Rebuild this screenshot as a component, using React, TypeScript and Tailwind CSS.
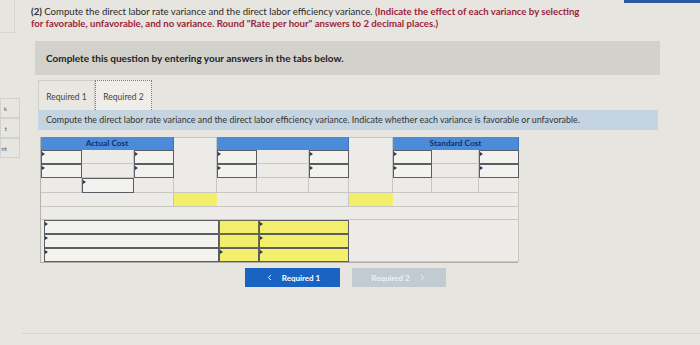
import React from 'react';
import { ChevronLeft, ChevronRight } from 'lucide-react';

const Plain: React.FC<{ className?: string; children?: React.ReactNode }> = ({ className = '', children }) => (
  <div className={`border-r border-b border-[#c9c7c2] bg-[#ecebe7] ${className}`}>{children}</div>
);

const Input: React.FC<{ className?: string; yellow?: boolean }> = ({ className = '', yellow }) => (
  <div className={`relative border border-[#5a5d62] ${yellow ? 'bg-[#f3ee6c]' : 'bg-[#f4f2ee]'} ${className}`}>
    <span className="absolute left-0 top-[1px] w-0 h-0 border-l-[3px] border-l-[#2b3a58] border-y-[2px] border-y-transparent" />
  </div>
);

const Header: React.FC<{ className?: string; label?: string }> = ({ className = '', label }) => (
  <div className={`bg-[#4c8bd9] border-r border-[#3f74b8] flex items-center justify-center text-[8.3px] font-bold text-[#13306a] ${className}`}>
    {label}
  </div>
);

const Table: React.FC = () => (
  <div className="ml-[18px] mt-[7px] w-[478px] border-l border-[#b5b3ae]">
    <div className="grid grid-cols-[41px_52px_40px_43px_40px_52px_40px_44px_39px_47px_40px] grid-rows-[13px_14px_14px_15px_14px_13px]">
      <Header className="col-start-1 col-span-3 row-start-1" label="Actual Cost" />
      <Plain className="col-start-4 row-start-1 row-span-4 border-t" />
      <Header className="col-start-5 col-span-3 row-start-1" />
      <Plain className="col-start-8 row-start-1 row-span-4 border-t" />
      <Header className="col-start-9 col-span-3 row-start-1" label="Standard Cost" />

      {[2, 3].map((r) => (
        <React.Fragment key={r}>
          <Input className={`col-start-1 ${r === 2 ? 'row-start-2' : 'row-start-3'}`} />
          <Plain className={`col-start-2 ${r === 2 ? 'row-start-2' : 'row-start-3'}`} />
          <Input className={`col-start-3 ${r === 2 ? 'row-start-2' : 'row-start-3'}`} />
          <Input className={`col-start-5 ${r === 2 ? 'row-start-2' : 'row-start-3'}`} />
          <Plain className={`col-start-6 ${r === 2 ? 'row-start-2' : 'row-start-3'}`} />
          <Input className={`col-start-7 ${r === 2 ? 'row-start-2' : 'row-start-3'}`} />
          <Input className={`col-start-9 ${r === 2 ? 'row-start-2' : 'row-start-3'}`} />
          <Plain className={`col-start-10 ${r === 2 ? 'row-start-2' : 'row-start-3'}`} />
          <Input className={`col-start-11 ${r === 2 ? 'row-start-2' : 'row-start-3'}`} />
        </React.Fragment>
      ))}

      <Plain className="col-start-1 row-start-4" />
      <Input className="col-start-2 row-start-4" />
      <Plain className="col-start-3 row-start-4" />
      <Plain className="col-start-5 row-start-4" />
      <Plain className="col-start-6 row-start-4" />
      <Plain className="col-start-7 row-start-4" />
      <Plain className="col-start-9 row-start-4" />
      <Plain className="col-start-10 row-start-4" />
      <Plain className="col-start-11 row-start-4" />

      <Plain className="col-start-1 col-span-3 row-start-5" />
      <div className="col-start-4 row-start-5 bg-[#f3ee6c] border-b border-[#c9c7c2]" />
      <Plain className="col-start-5 col-span-3 row-start-5" />
      <div className="col-start-8 row-start-5 bg-[#f3ee6c] border-b border-[#c9c7c2]" />
      <Plain className="col-start-9 col-span-3 row-start-5" />

      <Plain className="col-start-1 col-span-11 row-start-6" />
    </div>

    <div className="grid grid-cols-[3px_175px_40px_90px_170px] grid-rows-[14px_14px_14px] border-b border-[#aeaca7]">
      <div className="col-start-1 row-start-1 row-span-3 bg-[#ecebe7]" />
      <Input className="col-start-2 row-start-1" />
      <Input className="col-start-2 row-start-2" />
      <Input className="col-start-2 row-start-3" />
      <div className="col-start-3 row-start-1 bg-[#f3ee6c] border border-[#6a6a4c]" />
      <div className="col-start-3 row-start-2 bg-[#f3ee6c] border border-[#6a6a4c]" />
      <Input yellow className="col-start-3 row-start-3" />
      <Input yellow className="col-start-4 row-start-1" />
      <Input yellow className="col-start-4 row-start-2" />
      <Input yellow className="col-start-4 row-start-3" />
      <Plain className="col-start-5 row-start-1 row-span-3" />
    </div>
  </div>
);

export default function App() {
  return (
    <div className="w-[700px] h-[345px] overflow-hidden flex bg-[#e7e5e0] text-[#2a2a2a] font-['Lato','Liberation_Sans',sans-serif]">
      <div className="w-[22px] flex flex-col">
        <div className="w-[15px] h-[33px] border-r border-b border-[#d8d6d1]" />
        <div className="mt-[65px] flex flex-col">
          {['k', 't', 'nt'].map((t) => (
            <div key={t} className="w-[20px] h-[20px] border border-[#d3d1cc] flex items-center justify-end pr-[12px] text-[6px] text-[#555]">
              {t}
            </div>
          ))}
        </div>
      </div>

      <div className="flex-1 flex flex-col">
        <div className="h-[3px] flex justify-end">
          <div className="w-[76px] bg-[#2d5a9e]" />
        </div>

        <div className="pl-[9px] pt-[3px] text-[9.6px] leading-[12px] whitespace-nowrap">
          <span className="font-bold">(2)</span> Compute the direct labor rate variance and the direct labor efficiency variance.{' '}
          <span className="font-bold text-[#9c1f3a]">(Indicate the effect of each variance by selecting</span>
          <br />
          <span className="font-bold text-[#9c1f3a]">
            for favorable, unfavorable, and no variance. Round "Rate per hour" answers to 2 decimal places.)
          </span>
        </div>

        <div className="mt-[11px] ml-[13px] w-[625px] h-[34px] bg-[#d3d1cc] px-[11px] flex items-center text-[10px] font-bold text-[#222]">
          Complete this question by entering your answers in the tabs below.
        </div>

        <div className="mt-[5px] ml-[16px] flex">
          <div className="w-[57px] h-[30px] pt-[4px] border border-[#cfcdc8] border-b-0 bg-[#e9e7e2] flex items-center justify-center text-[8.5px] text-[#444]">
            Required 1
          </div>
          <div className="w-[57px] h-[30px] pt-[4px] border border-dotted border-[#7c7c7c] border-b-0 bg-[#efede8] flex items-center justify-center text-[8.5px] text-[#444]">
            Required 2
          </div>
        </div>

        <div className="ml-[16px] w-[620px] h-[20px] bg-[#c4d4e1] pl-[8px] flex items-center text-[8.9px] text-[#333] whitespace-nowrap">
          Compute the direct labor rate variance and the direct labor efficiency variance. Indicate whether each variance is favorable or unfavorable.
        </div>

        <Table />

        <div className="mt-[5px] ml-[223px] flex gap-[12px]">
          <button className="w-[95px] h-[19px] bg-[#1b63c2] text-white text-[8px] font-bold flex items-center justify-center gap-[8px]">
            <ChevronLeft className="w-[9px] h-[9px]" strokeWidth={2.5} />
            Required 1
          </button>
          <button className="w-[94px] h-[19px] bg-[#c3cbd2] text-[#eef1f4] text-[8px] font-bold flex items-center justify-center gap-[8px]">
            Required 2
            <ChevronRight className="w-[9px] h-[9px]" strokeWidth={2.5} />
          </button>
        </div>

        <div className="mt-auto mb-[11px] border-b border-[#d6d4cf]" />
      </div>
    </div>
  );
}
